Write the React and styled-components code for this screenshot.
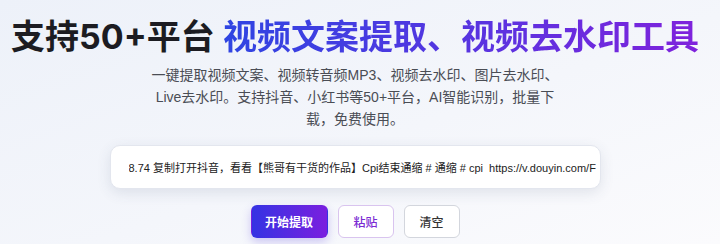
import React from "react";
import styled, { createGlobalStyle } from "styled-components";

const GlobalStyle = createGlobalStyle`
    html, body {
        margin: 0;
        padding: 0;
    }
    body {
        font-family: "Inter", "Noto Sans CJK SC", "Noto Sans", sans-serif;
        background: #fff;
    }
`;

const Page = styled.div`
    width: 720px;
    height: 244px;
    box-sizing: border-box;
    padding: 16px 10px 0 0;
    background: linear-gradient(160deg, #edf1f9 0%, #f4f6fb 55%, #fbfbfd 100%);
    display: flex;
    flex-direction: column;
    align-items: center;
    overflow: hidden;
`;

const Title = styled.h1`
    margin: 0;
    font-size: 34px;
    line-height: 41px;
    font-weight: 700;
    color: #1c1c22;
    white-space: nowrap;
`;

const Highlight = styled.span`
    background: linear-gradient(90deg, #2f45e2 0%, #5a33e0 55%, #7f22dc 100%);
    -webkit-background-clip: text;
    background-clip: text;
    color: transparent;
`;

const Desc = styled.p`
    margin: 7px 0 0;
    font-family: "Liberation Sans", "Noto Sans CJK SC", sans-serif;
    font-size: 14px;
    line-height: 22px;
    color: #4a4d55;
    text-align: center;
    white-space: nowrap;
`;

const InputBox = styled.div`
    margin-top: 15px;
    width: 491px;
    height: 44px;
    box-sizing: border-box;
    padding: 0 4px 0 18px;
    display: flex;
    align-items: center;
    background: #fff;
    border: 1px solid #e3e6ee;
    border-radius: 10px;
    box-shadow: 0 4px 14px rgba(60, 70, 110, 0.12);
    overflow: hidden;
`;

const InputText = styled.span`
    font-family: "Liberation Sans", "Noto Sans CJK SC", sans-serif;
    font-size: 11px;
    color: #222;
    white-space: nowrap;
    overflow: hidden;
`;

const Actions = styled.div`
    margin-top: 16px;
    display: flex;
    gap: 10px;
`;

const Button = styled.button`
    height: 33px;
    padding: 0;
    box-sizing: border-box;
    border-radius: 6px;
    font-family: "Noto Sans CJK SC", sans-serif;
    font-size: 12px;
    white-space: nowrap;
    cursor: pointer;
    background: ${(p) =>
        p.variant === "primary"
            ? "linear-gradient(90deg, #3533e3 0%, #7a1fdf 100%)"
            : "#fff"};
    color: ${(p) =>
        p.variant === "primary" ? "#fff" : p.variant === "accent" ? "#7b2bd3" : "#333"};
    border: 1px solid
        ${(p) =>
            p.variant === "primary"
                ? "transparent"
                : p.variant === "accent"
                ? "#d9c4ef"
                : "#d3d6dd"};
    font-weight: ${(p) => (p.variant === "primary" ? 700 : 500)};
    width: ${(p) => (p.variant === "primary" ? "77px" : "56px")};
    box-shadow: ${(p) =>
        p.variant === "primary" ? "0 4px 10px rgba(80, 50, 220, 0.25)" : "none"};
`;

const App = () => {
    return (
        <>
            <GlobalStyle />
            <Page>
                <Title>
                    支持50+平台 <Highlight>视频文案提取、视频去水印工具</Highlight>
                </Title>
                <Desc>
                    一键提取视频文案、视频转音频MP3、视频去水印、图片去水印、
                    <br />
                    Live去水印。支持抖音、小红书等50+平台，AI智能识别，批量下
                    <br />
                    载，免费使用。
                </Desc>
                <InputBox>
                    <InputText>
                        8.74 复制打开抖音，看看【熊哥有干货的作品】Cpi结束通缩 # 通缩 # cpi&nbsp;&nbsp;https://v.douyin.com/FhMcXyZ1/ 复制此链接
                    </InputText>
                </InputBox>
                <Actions>
                    <Button variant="primary">开始提取</Button>
                    <Button variant="accent">粘贴</Button>
                    <Button>清空</Button>
                </Actions>
            </Page>
        </>
    );
};

export default App;
